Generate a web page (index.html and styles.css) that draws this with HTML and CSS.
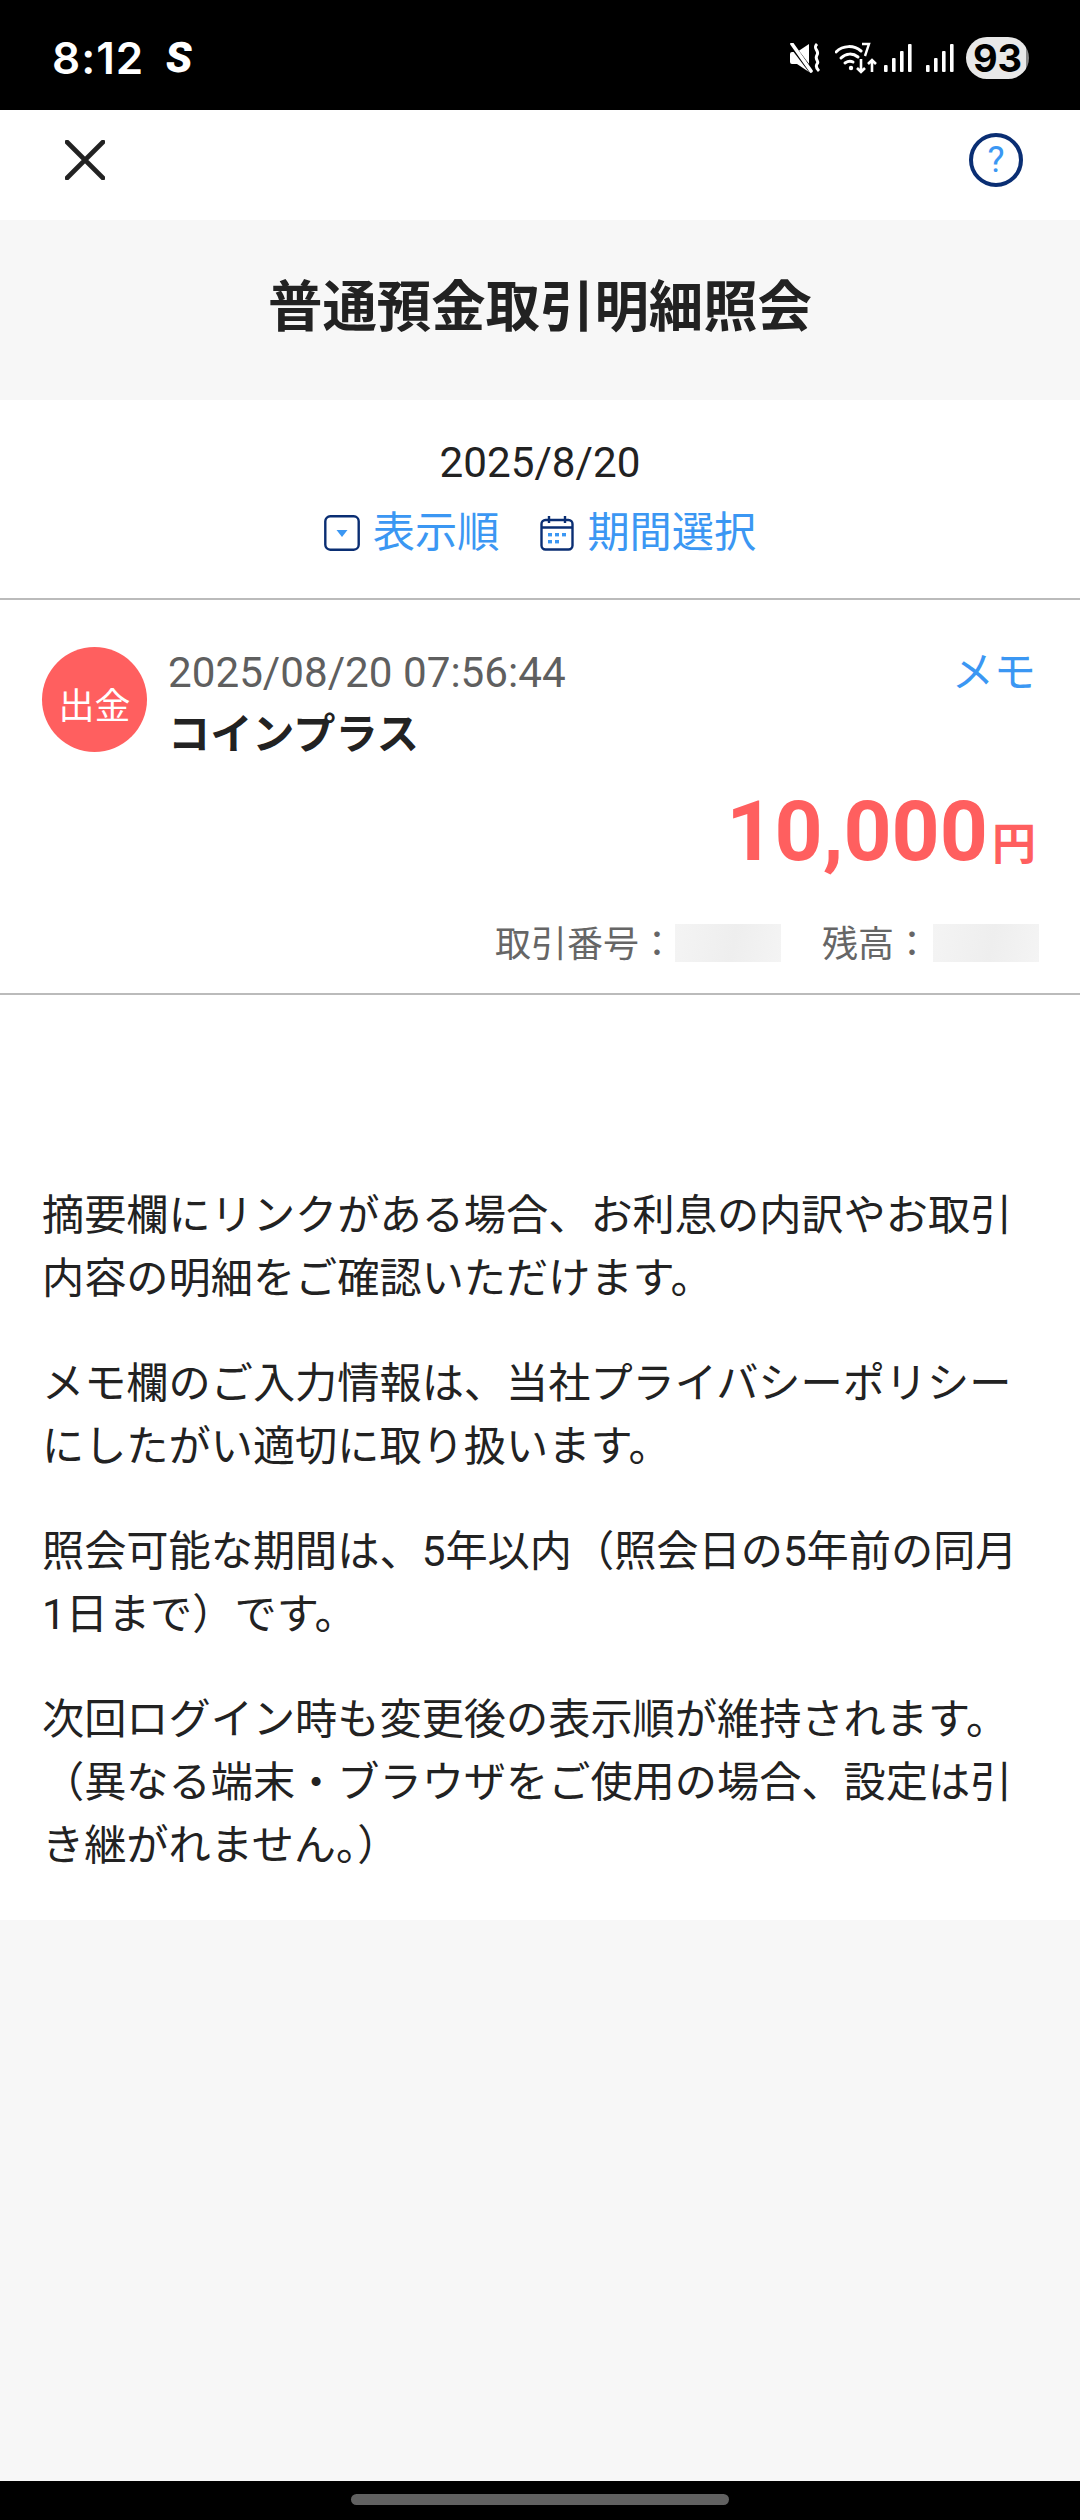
FILE: index.html
```html
<!DOCTYPE html>
<html lang="ja">
<head>
<meta charset="utf-8">
<title>普通預金取引明細照会</title>
<link rel="stylesheet" href="styles.css">
</head>
<body>
<div class="page">
  <div class="status">
    <div class="status-left"><span class="clock">8:12</span><span class="s-mark">S</span></div>
    <div class="status-right">
      <svg class="ic-mute" viewBox="0 0 30 30" width="30" height="30"><path d="M0 11q0-2 2-2h5L19 1v28L7 21H2q-2 0-2-2z" fill="#fff"/><path d="M0 0l22 29" stroke="#000" stroke-width="5"/><path d="M2 1l19 27" stroke="#fff" stroke-width="3.6" stroke-linecap="round"/><path d="M27 1c-5 5 3 6 0 11c-3 5 3 6 0 9c-2 3 0 5 2 7" stroke="#fff" stroke-width="3" fill="none"/></svg>
      <svg class="ic-wifi" viewBox="0 0 42 32" width="42" height="32"><g fill="none" stroke="#fff" stroke-width="3" stroke-linecap="round"><path d="M1 10c7-7 18-7 25-1"/><path d="M6 16c5-5 12-5 17-1"/><path d="M10 21c3-2 6-2 8-1"/></g><circle cx="16" cy="26" r="2.2" fill="#fff"/><path d="M27 2h7l-4 12" fill="none" stroke="#fff" stroke-width="2.4"/><path d="M26 17v13m-4-4l4 4 4-4M37 30V18m-4 4l4-4 4 4" fill="none" stroke="#fff" stroke-width="2.6"/></svg>
      <svg class="ic-sig" viewBox="0 0 28 30" width="28" height="30"><g fill="#fff"><rect x="0" y="22" width="3.6" height="7" rx="1"/><rect x="8" y="15" width="3.6" height="14" rx="1"/><rect x="16" y="8" width="3.6" height="21" rx="1"/><rect x="24" y="1" width="3.6" height="28" rx="1"/></g></svg>
      <svg class="ic-sig" viewBox="0 0 28 30" width="28" height="30"><g fill="#fff"><rect x="0" y="22" width="3.6" height="7" rx="1"/><rect x="8" y="15" width="3.6" height="14" rx="1"/><rect x="16" y="8" width="3.6" height="21" rx="1"/><rect x="24" y="1" width="3.6" height="28" rx="1"/></g></svg>
      <span class="battery">93</span>
    </div>
  </div>

  <div class="topbar">
    <svg class="ic-close" viewBox="0 0 40 40" width="40" height="40"><path d="M2 2l36 36M38 2L2 38" stroke="#222" stroke-width="4.6" stroke-linecap="round"/></svg>
    <span class="help">?</span>
  </div>

  <header class="title-band"><h1 class="title">普通預金取引明細照会</h1></header>

  <section class="date-section">
    <div class="date">2025/8/20</div>
    <div class="controls">
      <a class="control">
        <svg viewBox="0 0 36 36" width="36" height="36"><rect x="1.3" y="1.3" width="33.4" height="33.4" rx="5" fill="none" stroke="#0a2e73" stroke-width="2.4"/><path d="M12.5 15h11L18 22z" fill="#3b97f3"/></svg>
        <span>表示順</span>
      </a>
      <a class="control">
        <svg viewBox="0 0 34 36" width="34" height="36"><rect x="1.5" y="5" width="31" height="29.5" rx="4" fill="none" stroke="#0a2e73" stroke-width="2.4"/><path d="M1.5 12.5h31M9 1v7M25 1v7" stroke="#0a2e73" stroke-width="2.4"/><g fill="#3b97f3"><rect x="8" y="18" width="4" height="3.4"/><rect x="15" y="18" width="4" height="3.4"/><rect x="22" y="18" width="4" height="3.4"/><rect x="8" y="25" width="4" height="3.4"/><rect x="15" y="25" width="4" height="3.4"/></g></svg>
        <span>期間選択</span>
      </a>
    </div>
  </section>

  <section class="tx">
    <div class="tx-top">
      <div class="badge">出金</div>
      <div class="tx-main">
        <div class="tx-time">2025/08/20 07:56:44</div>
        <div class="tx-name">コインプラス</div>
      </div>
      <a class="memo">メモ</a>
    </div>
    <div class="amount"><span class="amount-num">10,000</span><span class="amount-unit">円</span></div>
    <div class="meta">
      <span class="meta-label">取引番号：</span><span class="masked"></span>
      <span class="meta-label meta-gap">残高：</span><span class="masked"></span>
    </div>
  </section>

  <section class="notes">
    <p>摘要欄にリンクがある場合、お利息の内訳やお取引内容の明細をご確認いただけます。</p>
    <p>メモ欄のご入力情報は、当社プライバシーポリシーにしたがい適切に取り扱います。</p>
    <p>照会可能な期間は、5年以内（照会日の5年前の同月1日まで）です。</p>
    <p>次回ログイン時も変更後の表示順が維持されます。（異なる端末・ブラウザをご使用の場合、設定は引き継がれません。）</p>
  </section>

  <div class="spacer"></div>
  <div class="navbar"><span class="handle"></span></div>
</div>
</body>
</html>
```
FILE: styles.css
```css
* { box-sizing: border-box; }
html, body { margin: 0; padding: 0; }
body {
  font-family: Roboto, "Noto Sans CJK JP", sans-serif;
  color: #222;
  background: #f7f7f7;
}
.page { width: 1080px; height: 2520px; display: flex; flex-direction: column; }

.status {
  height: 110px; background: #000; color: #fff;
  display: flex; justify-content: space-between; align-items: center;
  padding: 0 51px 0 52px; flex: none;
}
.status-left { display: flex; align-items: center; gap: 22px; padding-top: 6px; }
.clock { font-family: Inter, Roboto, sans-serif; font-size: 44px; font-weight: 600; line-height: 1; letter-spacing: 1px; }
.s-mark { font-family: Roboto, sans-serif; font-size: 42px; font-weight: 900; line-height: 1; transform: skewX(-6deg); }
.status-right { display: flex; align-items: center; padding-top: 6px; }
.ic-mute { margin-right: 15px; }
.ic-wifi { margin-right: 7px; }
.ic-sig { margin-right: 14px; }
.ic-sig + .battery { margin-left: -2px; }
.battery {
  width: 63px; height: 42px; border-radius: 21px;
  background: linear-gradient(90deg, #e8e8e8 95%, #888 95%);
  color: #000; font-family: Inter, Roboto, sans-serif; font-size: 38px; font-weight: 700;
  display: flex; align-items: center; justify-content: center;
}

.topbar {
  height: 110px; background: #fff; flex: none;
  display: flex; justify-content: space-between; align-items: center;
  padding: 0 57px 10px 65px;
}
.ic-close { display: block; }
.help {
  width: 54px; height: 54px; border-radius: 50%; border: 4px solid #0a2e73;
  color: #3b97f3; font-size: 36px; line-height: 1;
  display: flex; align-items: center; justify-content: center;
}

.title-band {
  height: 180px; background: #f7f7f7; flex: none;
  display: flex; align-items: center; justify-content: center;
  padding-bottom: 5px;
}
.title { margin: 0; font-size: 54.4px; font-weight: 700; line-height: 1.2; }

.date-section {
  background: #fff; height: 200px; flex: none;
  border-bottom: 2px solid #bbb;
  padding-top: 38px;
  display: flex; flex-direction: column; align-items: center;
}
.date { font-size: 42.2px; line-height: 50px; }
.controls { display: flex; align-items: center; gap: 41px; margin-top: 15px; color: #3b97f3; font-size: 42.2px; line-height: 60px; }
.control { display: flex; align-items: center; gap: 13px; }
.control svg { display: block; }

.tx {
  background: #fff; padding: 47px 44px 0 42px; height: 395px; flex: none;
  display: flex; flex-direction: column;
  border-bottom: 2px solid #bbb; background-clip: padding-box;
}
.tx-top { display: flex; align-items: flex-start; }
.badge {
  width: 105px; height: 105px; border-radius: 50%;
  background: #ff5f5f; color: #fff; font-size: 36px;
  display: flex; align-items: center; justify-content: center; flex: none;
  padding-top: 6px;
}
.tx-main { margin-left: 21px; flex: 1; }
.tx-time { font-size: 42.2px; line-height: 50px; color: #5f5f5f; margin-top: 1px; }
.tx-name { font-size: 42.2px; font-weight: 700; line-height: 60px; margin-top: 7px; }
.memo { color: #3b97f3; font-size: 42.2px; line-height: 50px; margin-top: 1px; }
.amount { text-align: right; color: #ff5f5f; font-weight: 700; margin-top: 17px; line-height: 100px; }
.amount-num { font-size: 84px; }
.amount-unit { font-size: 44px; margin-left: 4px; }
.meta {
  display: flex; justify-content: flex-end; align-items: center;
  margin-top: 14px; margin-right: -3px;
  font-size: 36px; color: #666; height: 44px;
}
.meta-gap { margin-left: 41px; padding-right: 3px; }
.masked { width: 106px; height: 38px; background: linear-gradient(100deg, #f4f4f4, #eeeeee 55%, #f4f4f4); margin-top: 4px; }

.notes {
  background: #fff; flex: none;
  padding: 189px 52px 0 42px; height: 925px;
  font-size: 42.2px; line-height: 63px;
}
.notes p { margin: 0 0 42px; }
.notes p:last-child { margin-bottom: 0; }

.spacer { flex: 1; background: #f7f7f7; }
.navbar { height: 39px; background: #000; flex: none; display: flex; align-items: center; justify-content: center; padding-bottom: 3px; }
.handle { width: 378px; height: 11px; border-radius: 6px; background: #616161; }
```
